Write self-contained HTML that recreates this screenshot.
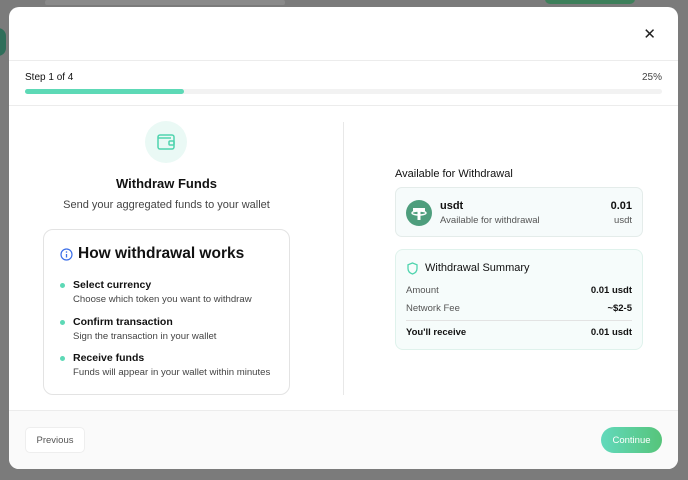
<!DOCTYPE html>
<html><head><meta charset="utf-8"><style>
*{box-sizing:border-box;margin:0;padding:0}
body{width:688px;height:480px;overflow:hidden;background:#7b7b7b;font-family:"Liberation Sans",sans-serif;color:#111;position:relative}
.bgtxt{position:absolute;left:45px;top:0;width:240px;height:5px;background:#8a8a8a;border-radius:2px}
.bgbtn{position:absolute;left:545px;top:-6px;width:90px;height:10px;background:#3d7f5a;border-radius:6px}
.bgl{position:absolute;left:-10px;top:28px;width:16px;height:28px;background:#2f6e5a;border-radius:8px}
.modal{position:absolute;left:9px;top:7px;width:669px;height:462px;background:#fff;border-radius:10px;overflow:hidden}
.close{position:absolute;right:22px;top:18px;font-size:15px;color:#222}
.hdr{position:absolute;top:53px;left:0;right:0;height:1px;background:#ececec}
.prog{position:absolute;top:98px;left:0;right:0;height:1px;background:#ececec}
.step{position:absolute;left:16px;top:65px;font-size:10px;color:#111}
.pct{position:absolute;right:16px;top:65px;font-size:10px;color:#444}
.bar{position:absolute;left:16px;right:16px;top:82px;height:5px;background:#f2f2f2;border-radius:3px}
.bar i{display:block;width:159px;height:5px;background:#5dd9b6;border-radius:3px}
.div{position:absolute;left:334px;top:115px;width:1px;height:273px;background:#e8e8e8}
.ic{position:absolute;left:136px;top:114px;width:42px;height:42px;border-radius:50%;background:#eaf9f5}
.t1{position:absolute;left:0;width:315px;text-align:center;top:169px;font-size:13px;font-weight:bold}
.t2{position:absolute;left:0;width:315px;text-align:center;top:192px;font-size:11px;color:#444}
.card{position:absolute;left:34px;top:222px;width:247px;height:166px;border:1px solid #e3e3e3;border-radius:10px}
.card h3{position:absolute;left:34px;top:15px;font-size:15.5px;font-weight:bold}
.it{position:absolute;left:29px}
.it b{display:block;font-size:10.5px;font-weight:bold;color:#111}
.it s{text-decoration:none;display:block;font-size:9.6px;color:#444;margin-top:3px}
.dot{position:absolute;left:-13px;top:4px;width:5px;height:5px;border-radius:50%;background:#5dd9b6}
.av{position:absolute;left:386px;top:161px;font-size:11px}
.c1{position:absolute;left:386px;top:180px;width:248px;height:50px;border:1px solid #e4ecea;border-radius:7px;background:#f6fbfb}
.tok{position:absolute;left:10px;top:12px;width:26px;height:26px;border-radius:50%;background:#4e9e7d}
.c2{position:absolute;left:386px;top:242px;width:248px;height:101px;border:1px solid #dff2ec;border-radius:8px;background:#f6fcfb}
.row{position:absolute;left:10px;right:10px;font-size:9.5px;color:#555;display:flex;justify-content:space-between}
.row span:last-child{color:#111;font-weight:bold}
.foot{position:absolute;left:0;right:0;top:403px;bottom:0;background:#fafafa;border-top:1px solid #ececec}
.prev{position:absolute;left:16px;top:16px;width:60px;height:26px;border:1px solid #eee;border-radius:5px;font-size:9.5px;color:#555;text-align:center;line-height:25px;background:#fff}
.cont{position:absolute;right:16px;top:16px;width:61px;height:26px;border-radius:13px;background:linear-gradient(90deg,#62d9bc,#56c47a);color:#fff;font-size:9.5px;text-align:center;line-height:27px}
</style></head><body>
<div class="bgtxt"></div><div class="bgbtn"></div><div class="bgl"></div>
<div class="modal">
<div class="close">✕</div>
<div class="hdr"></div>
<div class="step">Step 1 of 4</div><div class="pct">25%</div>
<div class="bar"><i></i></div>
<div class="prog"></div>
<div class="ic"><svg width="42" height="42" viewBox="0 0 42 42"><g fill="none" stroke="#4fd4ae" stroke-width="1.5"><rect x="13" y="14" width="16" height="14" rx="2"/><path d="M13 17h13"/><rect x="24" y="20" width="5" height="4" rx="1"/></g></svg></div>
<div class="t1">Withdraw Funds</div>
<div class="t2">Send your aggregated funds to your wallet</div>
<div class="card">
<svg style="position:absolute;left:16px;top:18px" width="13" height="13" viewBox="0 0 13 13"><circle cx="6.5" cy="6.5" r="5.5" fill="none" stroke="#3b6ee8" stroke-width="1.2"/><path d="M6.5 6v3.5" stroke="#3b6ee8" stroke-width="1.3"/><circle cx="6.5" cy="4" r=".8" fill="#3b6ee8"/></svg>
<h3>How withdrawal works</h3>
<div class="it" style="top:49px"><div class="dot"></div><b>Select currency</b><s>Choose which token you want to withdraw</s></div>
<div class="it" style="top:86px"><div class="dot"></div><b>Confirm transaction</b><s>Sign the transaction in your wallet</s></div>
<div class="it" style="top:122px"><div class="dot"></div><b>Receive funds</b><s>Funds will appear in your wallet within minutes</s></div>
</div>
<div class="div"></div>
<div class="av">Available for Withdrawal</div>
<div class="c1"><div class="tok"><svg width="26" height="26" viewBox="0 0 26 26"><path d="M7 8h12v3h-4.5v9h-3v-9H7z" fill="#fff"/><ellipse cx="13" cy="13" rx="7" ry="2" fill="none" stroke="#fff" stroke-width="1.4"/></svg></div>
<div style="position:absolute;left:44px;top:12px;font-size:11px;font-weight:bold">usdt</div>
<div style="position:absolute;left:44px;top:27px;font-size:9.5px;color:#555">Available for withdrawal</div>
<div style="position:absolute;right:10px;top:12px;font-size:11px;font-weight:bold">0.01</div>
<div style="position:absolute;right:10px;top:27px;font-size:9.5px;color:#555">usdt</div></div>
<div class="c2">
<svg style="position:absolute;left:11px;top:12px" width="11" height="13" viewBox="0 0 11 13"><path d="M5.5 1L10 2.8v3.7c0 2.8-2 4.7-4.5 5.5C3 11.2 1 9.3 1 6.5V2.8z" fill="none" stroke="#4fd4ae" stroke-width="1.3"/></svg>
<div style="position:absolute;left:29px;top:12px;font-size:11px">Withdrawal Summary</div>
<div class="row" style="top:35px"><span>Amount</span><span>0.01 usdt</span></div>
<div class="row" style="top:53px"><span>Network Fee</span><span>~$2-5</span></div>
<div style="position:absolute;left:10px;right:10px;top:70px;height:1px;background:#e3e3e3"></div>
<div class="row" style="top:77px"><span style="color:#111;font-weight:bold">You'll receive</span><span>0.01 usdt</span></div>
</div>
<div class="foot"><div class="prev">Previous</div><div class="cont">Continue</div></div>
</div>
</body></html>
